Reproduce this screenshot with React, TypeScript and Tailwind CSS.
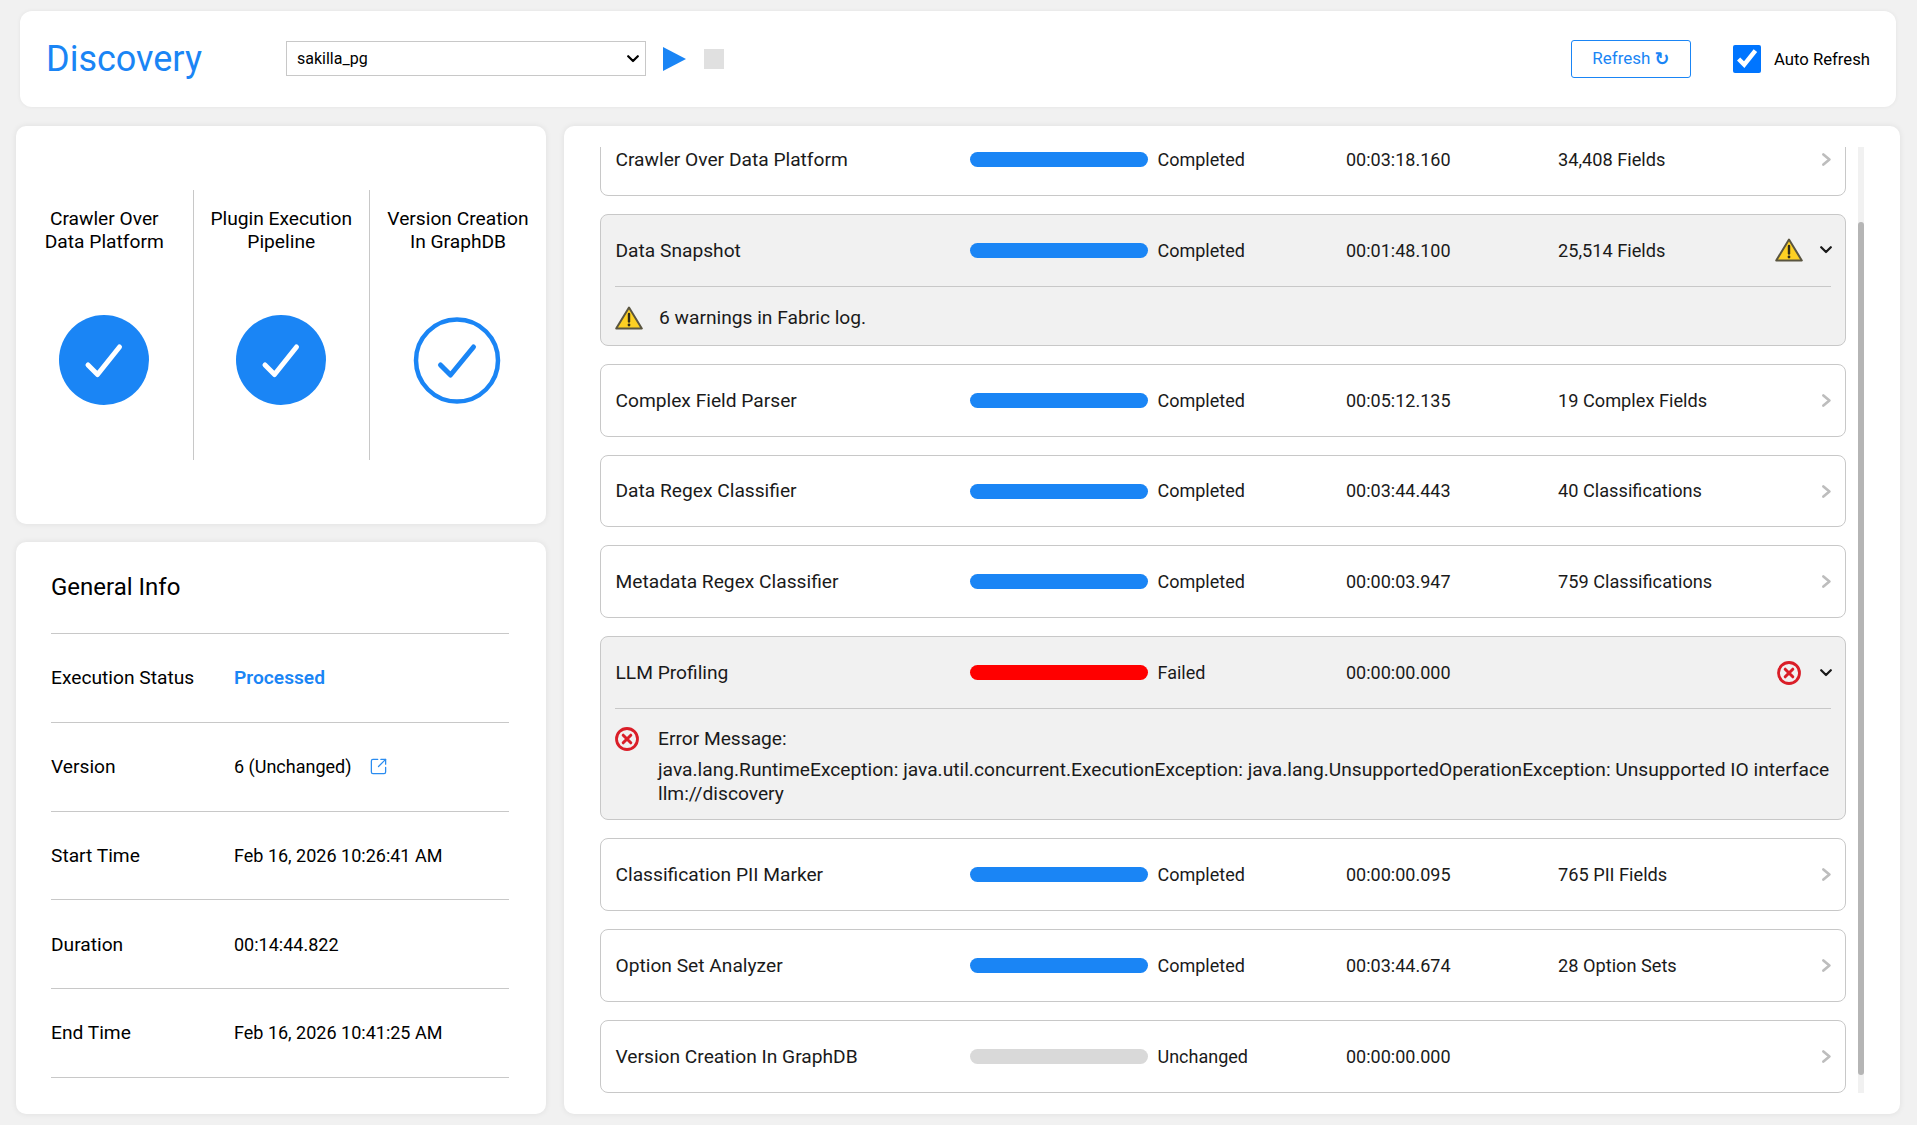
import React from 'react';
import { SquareArrowOutUpRight } from 'lucide-react';

interface Step {
  name: string;
  status: string;
  time: string;
  info?: string;
  state: 'ok' | 'warn' | 'fail' | 'none';
}

const steps: Step[] = [
  { name: 'Crawler Over Data Platform', status: 'Completed', time: '00:03:18.160', info: '34,408 Fields', state: 'ok' },
  { name: 'Data Snapshot', status: 'Completed', time: '00:01:48.100', info: '25,514 Fields', state: 'warn' },
  { name: 'Complex Field Parser', status: 'Completed', time: '00:05:12.135', info: '19 Complex Fields', state: 'ok' },
  { name: 'Data Regex Classifier', status: 'Completed', time: '00:03:44.443', info: '40 Classifications', state: 'ok' },
  { name: 'Metadata Regex Classifier', status: 'Completed', time: '00:00:03.947', info: '759 Classifications', state: 'ok' },
  { name: 'LLM Profiling', status: 'Failed', time: '00:00:00.000', state: 'fail' },
  { name: 'Classification PII Marker', status: 'Completed', time: '00:00:00.095', info: '765 PII Fields', state: 'ok' },
  { name: 'Option Set Analyzer', status: 'Completed', time: '00:03:44.674', info: '28 Option Sets', state: 'ok' },
  { name: 'Version Creation In GraphDB', status: 'Unchanged', time: '00:00:00.000', state: 'none' },
];

const WarnIcon = () => (
  <svg width="28" height="24" viewBox="0 0 28 24" className="shrink-0">
    <path d="M14 1.5 L26.8 22.5 H1.2 Z" fill="#fdd023" stroke="#5a5540" strokeWidth="2" strokeLinejoin="round" />
    <path d="M14 8 V15.5" stroke="#2e2a18" strokeWidth="2.4" strokeLinecap="round" />
    <circle cx="14" cy="19" r="1.4" fill="#2e2a18" />
  </svg>
);

const ErrorIcon = () => (
  <svg width="24" height="24" viewBox="0 0 24 24" className="shrink-0">
    <circle cx="12" cy="12" r="10.5" fill="none" stroke="#da1e28" strokeWidth="2.8" />
    <path d="M8.2 8.2 L15.8 15.8 M15.8 8.2 L8.2 15.8" stroke="#da1e28" strokeWidth="3" strokeLinecap="round" />
  </svg>
);

const ChevronRight = () => (
  <svg width="9" height="13" viewBox="0 0 9 13" fill="none">
    <path d="M1.4 1.4 L7.4 6.5 L1.4 11.6" stroke="#bdbdbd" strokeWidth="2.6" strokeLinecap="round" strokeLinejoin="round" />
  </svg>
);

const ChevronDown = ({ color = '#1a1a1a' }: { color?: string }) => (
  <svg width="12" height="8" viewBox="0 0 12 8" fill="none">
    <path d="M1.2 1.2 L6 6 L10.8 1.2" stroke={color} strokeWidth="2.2" strokeLinecap="round" strokeLinejoin="round" />
  </svg>
);

const barColor = (state: Step['state']) => {
  if (state === 'fail') return 'bg-[#ff0000]';
  if (state === 'none') return 'bg-[#d9d9d9]';
  return 'bg-[#1a85f5]';
};

const RowHeader: React.FC<{ step: Step }> = ({ step }) => (
  <div className="flex h-[71px] shrink-0 items-center pl-[14.5px] pr-[13px]">
    <div className="w-[354px] shrink-0 text-[19.2px]">{step.name}</div>
    <div className={`h-[15px] w-[178px] shrink-0 rounded-full ${barColor(step.state)}`} />
    <div className="ml-[10px] w-[188.5px] shrink-0">{step.status}</div>
    <div className="w-[212px] shrink-0">{step.time}</div>
    <div className="flex-1 text-[18.2px]">{step.info}</div>
    {step.state === 'warn' && <WarnIcon />}
    {step.state === 'fail' && <ErrorIcon />}
    {step.state === 'warn' || step.state === 'fail' ? (
      <div className={`flex w-[12px] justify-center ${step.state === 'fail' ? 'ml-[19px]' : 'ml-[17px]'}`}>
        <ChevronDown />
      </div>
    ) : (
      <div className="flex w-[12px] justify-center">
        <ChevronRight />
      </div>
    )}
  </div>
);

const StepRow: React.FC<{ step: Step }> = ({ step }) => {
  if (step.state === 'warn') {
    return (
      <div className="h-[132px] shrink-0 rounded-lg border border-[#c8c8c8] bg-[#f1f1f1]">
        <RowHeader step={step} />
        <div className="mx-[14px] flex items-center border-t border-[#c8c8c8] pt-[19px]">
          <WarnIcon />
          <span className="ml-[16px] text-[19.2px]">6 warnings in Fabric log.</span>
        </div>
      </div>
    );
  }
  if (step.state === 'fail') {
    return (
      <div className="h-[184px] shrink-0 rounded-lg border border-[#c8c8c8] bg-[#f1f1f1]">
        <RowHeader step={step} />
        <div className="mx-[14px] flex items-start border-t border-[#c8c8c8] pt-[18px]">
          <ErrorIcon />
          <div className="ml-[19px] text-[19.2px] leading-[23.4px]">
            <div className="mb-[7.6px]">Error Message:</div>
            <div>
              java.lang.RuntimeException: java.util.concurrent.ExecutionException: java.lang.UnsupportedOperationException: Unsupported IO interface llm://discovery
            </div>
          </div>
        </div>
      </div>
    );
  }
  return (
    <div className="h-[72.8px] shrink-0 rounded-lg border border-[#c8c8c8] bg-white">
      <RowHeader step={step} />
    </div>
  );
};

const CheckCircle: React.FC<{ outlined?: boolean }> = ({ outlined }) =>
  outlined ? (
    <svg width="90" height="90" viewBox="0 0 90 90" fill="none">
      <circle cx="44" cy="45.5" r="41" stroke="#1a85f5" strokeWidth="4.5" />
      <path d="M27.5 50 L37.5 60 L60.5 32" stroke="#1a85f5" strokeWidth="5" strokeLinecap="round" strokeLinejoin="round" />
    </svg>
  ) : (
    <svg width="90" height="90" viewBox="0 0 90 90" fill="none">
      <circle cx="45" cy="45" r="45" fill="#1a85f5" />
      <path d="M29 50 L38.5 59.5 L60.5 32" stroke="#fff" strokeWidth="5" strokeLinecap="round" strokeLinejoin="round" />
    </svg>
  );

const pipeline = [
  { title: 'Crawler Over', sub: 'Data Platform' },
  { title: 'Plugin Execution', sub: 'Pipeline' },
  { title: 'Version Creation', sub: 'In GraphDB', outlined: true },
];

const info = [
  { label: 'Execution Status', value: 'Processed' },
  { label: 'Version', value: '6 (Unchanged)' },
  { label: 'Start Time', value: 'Feb 16, 2026 10:26:41 AM' },
  { label: 'Duration', value: '00:14:44.822' },
  { label: 'End Time', value: 'Feb 16, 2026 10:41:25 AM' },
];

export default function App() {
  return (
    <div className="h-[1125px] w-[1917px] overflow-hidden bg-[#f1f1f1] pt-[11px] font-['Roboto',sans-serif] text-[18px] leading-[23.4px] text-[#1a1a1a]">
      <header className="ml-[20px] mr-[21px] flex h-[96px] items-center rounded-xl bg-white pl-[26px] pr-[26px] shadow-[0_0_4px_rgba(0,0,0,0.06)]">
        <h1 className="w-[240px] text-[36px] leading-none text-[#1a85f5]">Discovery</h1>
        <div className="relative -mt-[1px]">
          <select
            defaultValue="sakilla_pg"
            className="block h-[35px] w-[360px] appearance-none border border-[#c8c8c8] bg-white pl-[10px] pt-[1px] text-[16px] text-black"
          >
            <option value="sakilla_pg">sakilla_pg</option>
          </select>
          <div className="pointer-events-none absolute right-[7px] top-[14px]">
            <ChevronDown color="#000" />
          </div>
        </div>
        <svg width="23" height="24" viewBox="0 0 23 24" className="ml-[17px]">
          <path d="M0 0 L23 12 L0 24 Z" fill="#1a85f5" />
        </svg>
        <div className="ml-[18px] h-[20px] w-[20px] bg-[#e0e0e0]" />
        <button className="ml-auto flex h-[38px] w-[120px] items-center justify-center gap-[4px] rounded-[3px] border border-[#1a85f5] text-[17px] text-[#1a85f5]">
          Refresh <span className="font-['DejaVu_Sans',sans-serif] text-[18px] font-bold leading-none">↻</span>
        </button>
        <input type="checkbox" checked readOnly className="ml-[42px] h-[28px] w-[28px] accent-[#0075ff]" />
        <span className="ml-[13px] pt-[1px] text-[16.7px] text-black">Auto Refresh</span>
      </header>

      <div className="mt-[19px] flex gap-[18px] pl-[16px] pr-[17px]">
        <div className="flex w-[530px] shrink-0 flex-col gap-[18px]">
          <section className="flex h-[398px] items-center rounded-[10px] bg-white shadow-[0_0_6px_rgba(0,0,0,0.08)]">
            <div className="grid h-[270px] w-full grid-cols-[177.5px_176.5px_1fr]">
              {pipeline.map((item, i) => (
                <div
                  key={item.title}
                  className={`flex flex-col items-center pt-[17px] text-center ${i < 2 ? 'border-r border-[#c8c8c8]' : ''}`}
                >
                  <div className="h-[108px] text-[19.2px] text-black">
                    {item.title}
                    <br />
                    {item.sub}
                  </div>
                  <CheckCircle outlined={item.outlined} />
                </div>
              ))}
            </div>
          </section>

          <section className="h-[572px] rounded-[10px] bg-white pl-[35px] pr-[37px] shadow-[0_0_6px_rgba(0,0,0,0.08)]">
            <h2 className="flex h-[92px] items-center border-b border-[#c8c8c8] text-[24px] text-black">General Info</h2>
            {info.map((row) => (
              <div key={row.label} className="flex h-[88.8px] items-center border-b border-[#c8c8c8] text-black">
                <div className="w-[183px] shrink-0 text-[19.2px]">{row.label}</div>
                {row.value === 'Processed' ? (
                  <div className="text-[19.2px] font-semibold text-[#1a85f5]">{row.value}</div>
                ) : (
                  <div>{row.value}</div>
                )}
                {row.label === 'Version' && (
                  <SquareArrowOutUpRight className="ml-[17px] h-[19px] w-[19px] text-[#2a8cf0]" strokeWidth={1.6} />
                )}
              </div>
            ))}
          </section>
        </div>

        <section className="flex h-[988px] flex-1 gap-[12px] rounded-[10px] bg-white pb-[21px] pl-[36px] pr-[36px] pt-[21px] shadow-[0_0_6px_rgba(0,0,0,0.08)]">
          <div className="min-w-0 flex-1 overflow-hidden">
            <div className="-mt-[24px] flex flex-col gap-[18px]">
              {steps.map((step) => (
                <StepRow key={step.name} step={step} />
              ))}
            </div>
          </div>
          <div className="w-[6px] shrink-0 bg-[#f1f1f1] pt-[75px]">
            <div className="h-[853px] rounded-b-full rounded-t-full bg-[#b5b5b5]" />
          </div>
        </section>
      </div>
    </div>
  );
}
